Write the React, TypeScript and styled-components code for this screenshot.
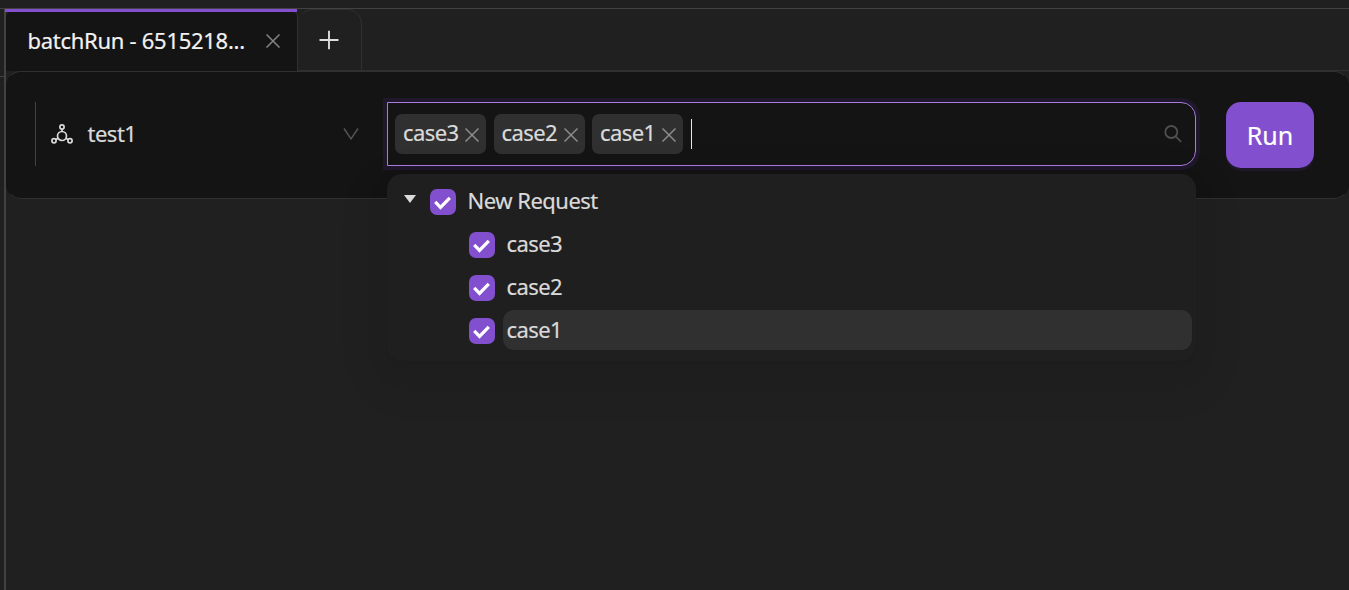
import React from 'react';
import styled, { createGlobalStyle } from 'styled-components';

const GlobalStyle = createGlobalStyle`
  * { box-sizing: border-box; }
  body {
    margin: 0;
    overflow: hidden;
    background: #202020;
    color: #dadada;
    font-family: 'Noto Sans', 'Open Sans', sans-serif;
    font-size: 22px;
  }
`;

const Page = styled.div`
  display: flex;
  flex-direction: column;
  width: 100%;
  height: 590px;
  overflow: hidden;
`;

const TopStrip = styled.div`
  flex: none;
  height: 9px;
  border-bottom: 1px solid #424242;
`;

const Body = styled.div`
  flex: 1;
  display: flex;
  min-height: 0;
`;

const Gutter = styled.div`
  flex: none;
  width: 6px;
  border-right: 2px solid #424242;
`;

const GutterHead = styled.div`
  height: 68px;
  border-bottom: 1px solid #424242;
`;

const Main = styled.main`
  flex: 1;
  min-width: 0;
`;

const TabBar = styled.div`
  display: flex;
  height: 62px;
  box-shadow: inset 0 -1px #303030;
`;

const Tab = styled.div`
  display: flex;
  flex-direction: column;
  width: 292px;
`;

const TabInk = styled.div`
  flex: none;
  width: 292px;
  height: 3px;
  margin-left: -1px;
  background: #824fcf;
`;

const TabBody = styled.div`
  flex: 1;
  display: flex;
  align-items: center;
  justify-content: space-between;
  padding: 0 17px 3px 21.5px;
  background: #141414;
  border-right: 1px solid #303030;
  border-radius: 5px 5px 0 0;
  color: #f2f2f2;

  svg { margin-top: 2px; }
`;

const AddTab = styled.div`
  display: flex;
  align-items: center;
  justify-content: center;
  width: 64px;
  padding-right: 1px;
  border: 1px solid #303030;
  border-left: 0;
  border-radius: 15px 15px 0 0;
`;

const Panel = styled.section`
  display: flex;
  height: 128px;
  padding: 30px 0 0 28px;
  background: #141414;
  border: 1px solid #303030;
  border-left-color: #141414;
  border-right-color: #141414;
  border-radius: 15px;
`;

const Label = styled.span<{ $spacing?: number; $size?: number }>`
  font-size: ${(p) => p.$size ?? 22}px;
  line-height: 30px;
  letter-spacing: ${(p) => p.$spacing ?? 0}px;
  white-space: nowrap;
  -webkit-text-stroke: 0.2px currentColor;
`;

const EnvSelect = styled.div`
  display: flex;
  flex: none;
  align-items: center;
  width: 352px;
  height: 64px;
  padding: 0 28px 0 15px;
  border-left: 1px solid #424242;

  ${Label} {
    flex: 1;
    margin: 0 0 2px 14.5px;
  }
`;

const CaseSelect = styled.div`
  position: relative;
  display: flex;
  flex: none;
  align-items: center;
  width: 809px;
  height: 64px;
  padding: 0 13px 0 7px;
  border: 1px solid #ab7ae0;
  border-radius: 0 15px 15px 0;
  box-shadow: 0 0 0 4px #1e182a;
`;

const Tag = styled.div`
  display: flex;
  align-items: center;
  justify-content: space-between;
  width: 91px;
  height: 40px;
  margin-right: 7.5px;
  padding: 0 7px 4px 8px;
  background: #303030;
  border-radius: 7px;

  svg { margin-top: 5px; }
`;

const Caret = styled.div`
  width: 1px;
  height: 30px;
  margin-right: auto;
  background: #e6e6e6;
`;

const Dropdown = styled.div`
  position: absolute;
  z-index: 2;
  top: 71px;
  left: -1px;
  display: flex;
  flex-direction: column;
  gap: 3px;
  width: 809px;
  height: 187px;
  padding: 7px 4px;
  background: #1f1f1f;
  border-radius: 15px;
  box-shadow: 0 11px 29px rgba(0, 0, 0, 0.05), 0 5px 11px -7px rgba(0, 0, 0, 0.1),
    0 16px 50px 14px rgba(0, 0, 0, 0.04);
`;

const TreeRow = styled.div<{ $child?: boolean }>`
  display: flex;
  align-items: center;
  height: 40px;
  padding-left: ${(p) => (p.$child ? 78 : 13)}px;
`;

const Twisty = styled.svg`
  width: 12px;
  height: 8px;
  margin: 0 14px 4px 0;
`;

const Checkbox = styled.span`
  display: flex;
  flex: none;
  width: 26px;
  height: 26px;
  margin-top: 2px;
  background: #824fcf;
  border-radius: 7px;
`;

const TreeTitle = styled.div<{ $active?: boolean }>`
  flex: 1;
  height: 40px;
  margin-left: 8px;
  padding: 4px 3.5px;
  background: ${(p) => (p.$active ? '#303030' : 'transparent')};
  border-radius: 11px;
`;

const RunButton = styled.button`
  display: flex;
  flex: none;
  align-items: center;
  justify-content: center;
  width: 88px;
  height: 66px;
  margin-left: 30px;
  padding: 0 0 1px;
  background: #824fcf;
  border: 0;
  border-radius: 15px;
  box-shadow: 0 3px 0 #1e182a;
  color: #fff;
  font-family: inherit;
`;

const Cross = ({ size = 14, color = '#8c8c8c' }: { size?: number; color?: string }) => (
  <svg width={size} height={size} viewBox="0 0 14 14" fill="none" stroke={color} strokeWidth="1.5">
    <path d="M.5.5l13 13M13.5.5l-13 13" />
  </svg>
);

const Check = () => (
  <Checkbox>
    <svg width="26" height="26" viewBox="0 0 26 26" fill="none" stroke="#fff" strokeWidth="3.2">
      <path d="M5.2 12.9l5.3 5.5L19.8 8.8" />
    </svg>
  </Checkbox>
);

const cases = [
  { name: 'case3', active: false },
  { name: 'case2', active: false },
  { name: 'case1', active: true },
];

export default function App() {
  return (
    <>
      <GlobalStyle />
      <Page>
        <TopStrip />
        <Body>
          <Gutter>
            <GutterHead />
          </Gutter>
          <Main>
            <TabBar>
              <Tab>
                <TabInk />
                <TabBody>
                  <Label $spacing={-0.28}>batchRun - 6515218...</Label>
                  <Cross color="#858585" />
                </TabBody>
              </Tab>
              <AddTab>
                <svg width="20" height="20" viewBox="0 0 20 20" stroke="#dedede" strokeWidth="1.9">
                  <path d="M.5 10h19M10 .8v18.4" />
                </svg>
              </AddTab>
            </TabBar>
            <Panel>
              <EnvSelect>
                <svg width="22" height="20" viewBox="0 0 22 20" fill="none" stroke="#dadada" strokeWidth="1.7">
                  <circle cx="11" cy="12" r="4.5" />
                  <circle cx="11" cy="3" r="2.1" />
                  <circle cx="3" cy="16.8" r="2.1" />
                  <circle cx="19" cy="16.8" r="2.1" />
                  <path d="M11 5.1v2.5M7.2 14.2l-2.3 1.4M14.8 14.2l2.3 1.4" />
                </svg>
                <Label $spacing={-0.5}>test1</Label>
                <svg width="16" height="12" viewBox="0 0 16 12" fill="none" stroke="#555" strokeWidth="1.5">
                  <path d="M1 .5l7 10.3L15 .5" />
                </svg>
              </EnvSelect>
              <CaseSelect>
                {cases.map((c) => (
                  <Tag key={c.name}>
                    <Label $spacing={-0.6}>{c.name}</Label>
                    <Cross />
                  </Tag>
                ))}
                <Caret />
                <svg width="18" height="18" viewBox="0 0 18 18" fill="none" stroke="#4f4f4f" strokeWidth="1.8">
                  <circle cx="7.3" cy="7" r="6" />
                  <path d="M11.6 11.3l5.6 5.6" />
                </svg>
                <Dropdown>
                  <TreeRow>
                    <Twisty viewBox="0 0 12 8">
                      <path d="M0 0h12L6 8z" fill="#dadada" />
                    </Twisty>
                    <Check />
                    <TreeTitle>
                      <Label $spacing={-0.5}>New Request</Label>
                    </TreeTitle>
                  </TreeRow>
                  {cases.map((c) => (
                    <TreeRow key={c.name} $child>
                      <Check />
                      <TreeTitle $active={c.active}>
                        <Label $spacing={-0.6}>{c.name}</Label>
                      </TreeTitle>
                    </TreeRow>
                  ))}
                </Dropdown>
              </CaseSelect>
              <RunButton>
                <Label $size={25}>Run</Label>
              </RunButton>
            </Panel>
          </Main>
        </Body>
      </Page>
    </>
  );
}
